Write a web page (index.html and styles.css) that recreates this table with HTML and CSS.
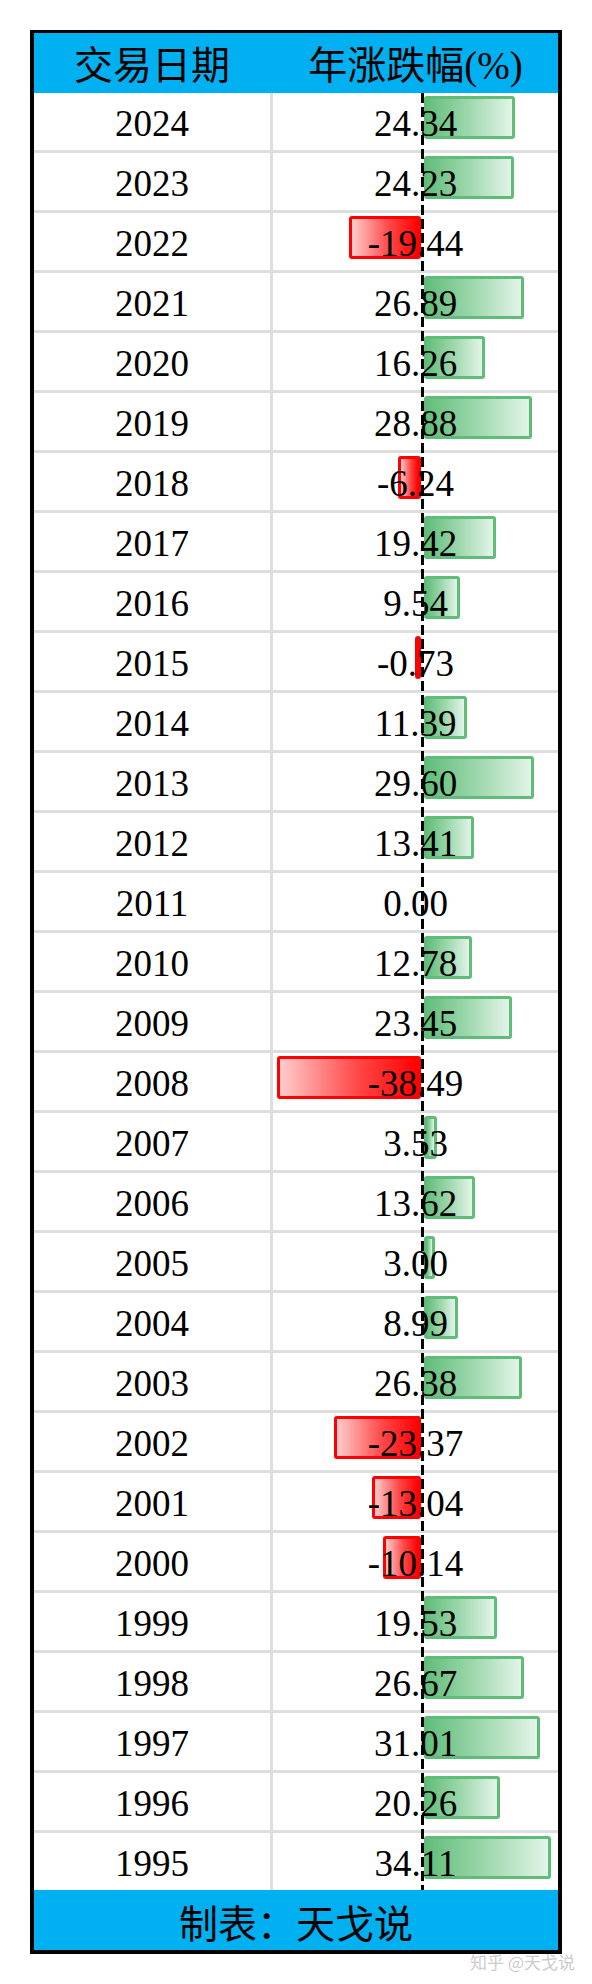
FILE: index.html
```html
<!DOCTYPE html>
<html>
  <head>
    <title>年涨跌幅</title>
    <link rel="stylesheet" href="styles.css">
  </head>
  <body>
    <div class="sheet">
      <div class="head">
        <div class="hcell">交易日期</div>
        <div class="hcell">年涨跌幅(%)</div>
      </div>

      <div class="grid-wrap">
        <div class="rows js-rows"></div>
        <div class="axis"></div>
      </div>

      <div class="foot">制表：天戈说</div>
    </div>

    <div class="mark">知乎 @天戈说</div>

    <script>
      const data = [
        [2024, 24.34], [2023, 24.23], [2022, -19.44], [2021, 26.89],
        [2020, 16.26], [2019, 28.88], [2018, -6.24], [2017, 19.42],
        [2016, 9.54], [2015, -0.73], [2014, 11.39], [2013, 29.60],
        [2012, 13.41], [2011, 0.00], [2010, 12.78], [2009, 23.45],
        [2008, -38.49], [2007, 3.53], [2006, 13.62], [2005, 3.00],
        [2004, 8.99], [2003, 26.38], [2002, -23.37], [2001, -13.04],
        [2000, -10.14], [1999, 19.53], [1998, 26.67], [1997, 31.01],
        [1996, 20.26], [1995, 34.11]
      ];

      let html = '';

      data.forEach(([year, value]) => {
        let bar = '';

        if (value !== 0) {
          const width = Math.max(Math.abs(value) * 3.73, 5).toFixed(1);
          const kind = value > 0 ? 'bar-pos' : 'bar-neg';
          bar = `<div class="bar ${kind}" style="width: ${width}px"></div>`;
        }

        html += `
          <div class="row">
            <div class="cell">${year}</div>
            <div class="cell">${bar}<span class="num">${value.toFixed(2)}</span></div>
          </div>`;
      });

      document.querySelector('.js-rows').innerHTML = html;
    </script>
  </body>
</html>
```

FILE: styles.css
```css
body{
  margin: 0;
  background-color: #ffffff;
  color: #000000;
  font-family: "Liberation Serif", "Noto Sans CJK SC", serif;
}

.sheet{
  width: 524px;
  margin: 30px 0 0 30px;
  border: 4px solid #000000;
  border-top-width: 3px;
}

.head{
  display: grid;
  grid-template-columns: 236px 285px;
  column-gap: 3px;
  height: 60px;
  background-color: #00b0f0;
}
.hcell{
  display: flex;
  align-items: center;
  justify-content: center;
  box-sizing: border-box;
  padding-bottom: 3px;
  font-size: 39px;
}

.grid-wrap{
  position: relative;
}
.rows{
  display: grid;
  row-gap: 3px;
  background-color: #dedede;
}
.row{
  display: grid;
  grid-template-columns: 236px 285px;
  column-gap: 3px;
  height: 57px;
}
.cell{
  position: relative;
  display: flex;
  align-items: center;
  justify-content: center;
  box-sizing: border-box;
  padding-top: 3px;
  background-color: #ffffff;
  font-size: 37px;
}
.num{
  position: relative;
  z-index: 1;
}

.bar{
  position: absolute;
  top: 3px;
  height: 43px;
  box-sizing: border-box;
  border: 3px solid;
  border-radius: 3px;
}
.bar-pos{
  left: 151px;
  border-color: #5fbd79;
  background: linear-gradient(to right, #63be7b, #9fd8ae 50%, #e3f4e8);
}
.bar-neg{
  right: 137px;
  border-color: #ff0000;
  background: linear-gradient(to right, #ffcccc, #ff4a4a 55%, #ff0000);
}

.axis{
  position: absolute;
  top: 0;
  bottom: 0;
  left: 387px;
  width: 3px;
  z-index: 2;
  background: repeating-linear-gradient(to bottom, #000000 0 10px, transparent 10px 14px);
}

.foot{
  display: flex;
  align-items: center;
  justify-content: center;
  height: 60px;
  padding-top: 2px;
  box-sizing: border-box;
  background-color: #00b0f0;
  font-size: 39px;
}

.mark{
  margin-top: -2px;
  padding-right: 17px;
  text-align: right;
  font-family: "Noto Sans CJK SC", sans-serif;
  font-size: 17px;
  line-height: 20px;
  color: #cccccc;
}
```
